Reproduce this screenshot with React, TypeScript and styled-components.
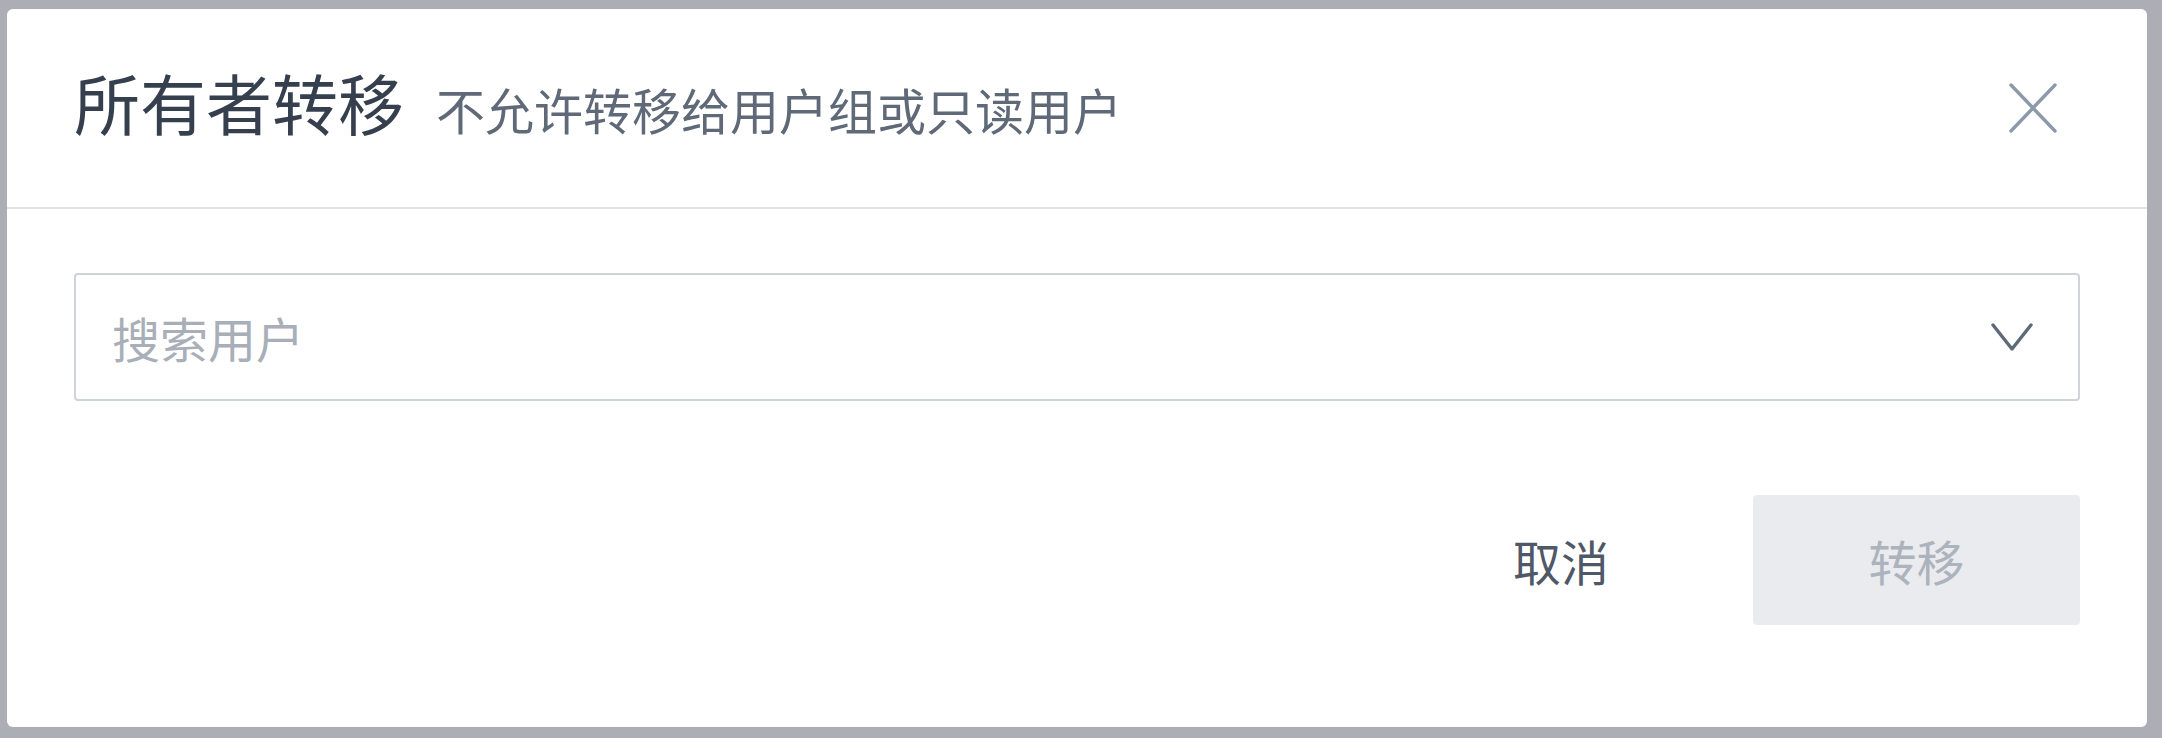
import React from "react";
import styled, { createGlobalStyle } from "styled-components";

const Global = createGlobalStyle`
  html, body {
    margin: 0;
    padding: 0;
    background: #abaeb4;
  }
  body {
    font-family: "Noto Sans CJK SC", "Noto Sans", sans-serif;
  }
  * { box-sizing: border-box; }
`;

const Page = styled.div`
  width: 2162px;
  height: 738px;
  padding: 9px 15px 11px 7px;
  background: #abaeb4;
`;

const Dialog = styled.div`
  width: 2140px;
  height: 718px;
  background: #ffffff;
  border-radius: 6px;
  display: flex;
  flex-direction: column;
  overflow: hidden;
`;

const Header = styled.header`
  height: 200px;
  padding: 0 67px 0 67px;
  display: flex;
  align-items: center;
  justify-content: space-between;
  border-bottom: 2px solid #e0e3e9;
`;

const TitleGroup = styled.div`
  display: flex;
  align-items: baseline;
  gap: 32px;
  padding-bottom: 14px;
`;

const Title = styled.h2`
  margin: 0;
  font-size: 66px;
  line-height: 1;
  font-weight: 400;
  color: #363f4d;
`;

const Subtitle = styled.span`
  font-size: 49px;
  line-height: 1;
  color: #5f6977;
`;

const CloseButton = styled.button`
  border: 0;
  background: transparent;
  padding: 0;
  margin-right: 23px;
  width: 48px;
  height: 50px;
  display: flex;
  align-items: center;
  justify-content: center;
  cursor: pointer;
`;

const Body = styled.div`
  padding: 64px 67px 0;
`;

const Select = styled.div`
  height: 128px;
  border: 2px solid #cfd3da;
  border-radius: 4px;
  padding: 0 45px 0 36px;
  display: flex;
  align-items: center;
  justify-content: space-between;
`;

const Placeholder = styled.span`
  font-size: 48px;
  line-height: 1;
  color: #a9afb8;
`;

const Footer = styled.div`
  padding: 94px 67px 0;
  display: flex;
  justify-content: flex-end;
  gap: 72px;
`;

const Button = styled.button<{ $variant: "ghost" | "disabled" }>`
  height: 130px;
  border: 0;
  border-radius: 4px;
  font-family: "Noto Sans CJK SC", "Noto Sans", sans-serif;
  font-size: 48px;
  line-height: 1;
  padding: 0;
  cursor: ${(p) => (p.$variant === "disabled" ? "not-allowed" : "pointer")};
  width: ${(p) => (p.$variant === "disabled" ? "327px" : "240px")};
  background: ${(p) => (p.$variant === "disabled" ? "#e9ebef" : "transparent")};
  color: ${(p) => (p.$variant === "disabled" ? "#adb3bc" : "#4f5866")};
`;

export default function App() {
  return (
    <Page>
      <Global />
      <Dialog>
        <Header>
          <TitleGroup>
            <Title>所有者转移</Title>
            <Subtitle>不允许转移给用户组或只读用户</Subtitle>
          </TitleGroup>
          <CloseButton aria-label="关闭">
            <svg width="48" height="50" viewBox="0 0 48 50" fill="none">
              <path
                d="M2 2 L46 48 M46 2 L2 48"
                stroke="#8d99ab"
                strokeWidth="3.4"
                strokeLinecap="round"
              />
            </svg>
          </CloseButton>
        </Header>
        <Body>
          <Select>
            <Placeholder>搜索用户</Placeholder>
            <svg width="42" height="30" viewBox="0 0 42 30" fill="none">
              <path
                d="M2 3 L21 27 L40 3"
                stroke="#5f6a79"
                strokeWidth="3.4"
                strokeLinecap="round"
                strokeLinejoin="round"
              />
            </svg>
          </Select>
        </Body>
        <Footer>
          <Button $variant="ghost">取消</Button>
          <Button $variant="disabled" disabled>
            转移
          </Button>
        </Footer>
      </Dialog>
    </Page>
  );
}
